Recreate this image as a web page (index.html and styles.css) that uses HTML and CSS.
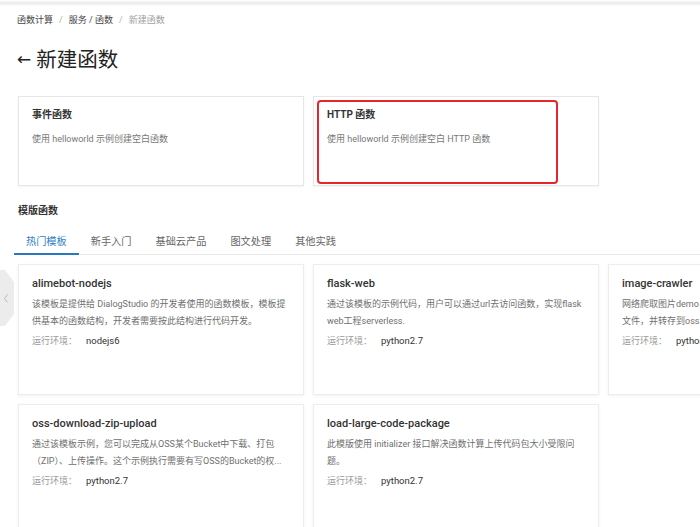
FILE: index.html
```html
<!DOCTYPE html>
<html lang="zh-CN">
<head>
<meta charset="utf-8">
<title>新建函数</title>
<link rel="stylesheet" href="styles.css">
</head>
<body>
<div class="topbar"></div>
<main class="page">
  <nav class="breadcrumb">
    <span class="crumb">函数计算</span><span class="sep">/</span><span class="crumb">服务 / 函数</span><span class="sep">/</span><span class="crumb current">新建函数</span>
  </nav>
  <h1 class="title"><span class="back">←</span>新建函数</h1>

  <div class="type-row">
    <div class="type-card">
      <div class="type-title">事件函数</div>
      <div class="type-desc">使用 helloworld 示例创建空白函数</div>
    </div>
    <div class="type-card">
      <div class="type-title">HTTP 函数</div>
      <div class="type-desc">使用 helloworld 示例创建空白 HTTP 函数</div>
      <div class="highlight"></div>
    </div>
  </div>

  <div class="section-label">模版函数</div>

  <div class="tabs">
    <div class="tab active">热门模板</div>
    <div class="tab">新手入门</div>
    <div class="tab">基础云产品</div>
    <div class="tab">图文处理</div>
    <div class="tab">其他实践</div>
  </div>

  <div class="tpl-wrap">
    <div class="prev">
      <svg width="15" height="56" viewBox="0 0 15 56"><path d="M0 0 H5 L14 12 V44 L5 56 H0 Z" fill="#ececec"/><path d="M7.5 24.5 L4.5 28.5 L7.5 32.5" fill="none" stroke="#b8b8b8" stroke-width="1"/></svg>
    </div>
    <div class="tpl-grid">
      <div class="tpl-card">
        <div class="tpl-title">alimebot-nodejs</div>
        <div class="tpl-desc">该模板是提供给 DialogStudio 的开发者使用的函数模板，模板提供基本的函数结构，开发者需要按此结构进行代码开发。</div>
        <div class="tpl-env"><span class="env-label">运行环境：</span><span class="env-value">nodejs6</span></div>
      </div>
      <div class="tpl-card">
        <div class="tpl-title">flask-web</div>
        <div class="tpl-desc">通过该模板的示例代码，用户可以通过url去访问函数，实现flask web工程serverless.</div>
        <div class="tpl-env"><span class="env-label">运行环境：</span><span class="env-value">python2.7</span></div>
      </div>
      <div class="tpl-card">
        <div class="tpl-title">image-crawler</div>
        <div class="tpl-desc">网络爬取图片demo，从指定网页中爬取所有图片<br>文件，并转存到oss中，方便后续处理。</div>
        <div class="tpl-env"><span class="env-label">运行环境：</span><span class="env-value">python2.7</span></div>
      </div>
      <div class="tpl-card">
        <div class="tpl-title">oss-download-zip-upload</div>
        <div class="tpl-desc">通过该模板示例，您可以完成从OSS某个Bucket中下载、打包（ZIP）、上传操作。这个示例执行需要有写OSS的Bucket的权...</div>
        <div class="tpl-env"><span class="env-label">运行环境：</span><span class="env-value">python2.7</span></div>
      </div>
      <div class="tpl-card">
        <div class="tpl-title">load-large-code-package</div>
        <div class="tpl-desc">此模版使用 initializer 接口解决函数计算上传代码包大小受限问题。</div>
        <div class="tpl-env"><span class="env-label">运行环境：</span><span class="env-value">python2.7</span></div>
      </div>
    </div>
  </div>
</main>
</body>
</html>
```

FILE: styles.css
```css
* { box-sizing: border-box; }
html, body {
  margin: 0;
  padding: 0;
  background: #fff;
  overflow: hidden;
}
body {
  width: 700px;
  height: 527px;
  font-family: "Roboto", "Noto Sans CJK SC", sans-serif;
  color: #333;
}
.topbar {
  height: 6px;
  background: linear-gradient(#ffffff 0, #ffffff 1px, #ececec 2px, #efefef 4px, #ffffff 6px);
}
.page {
  padding: 0 0 0 18px;
  width: 1000px;
}
.breadcrumb {
  margin-top: 7px;
  font-size: 9px;
  line-height: 14px;
  display: flex;
  align-items: center;
  margin-left: -1px;
}
.crumb { color: #444; }
.crumb.current { color: #a0a0a0; }
.sep { color: #b0b0b0; margin: 0 6px; }
.title {
  margin: 19px 0 0 -1px;
  font-size: 20.5px;
  line-height: 28px;
  font-weight: 400;
  color: #222;
  display: flex;
  align-items: center;
}
.back {
  margin-right: 5px;
  font-family: "DejaVu Sans", sans-serif;
  font-size: 17px;
  position: relative;
  top: -1px;
}
.type-row {
  margin-top: 22px;
  display: flex;
  gap: 9px;
}
.type-card {
  position: relative;
  width: 286px;
  height: 90px;
  border: 1px solid #e6e6e6;
  box-shadow: 0 1px 2px rgba(0,0,0,0.05);
  padding: 11px 13px;
  background: #fff;
}
.type-title {
  font-size: 10px;
  line-height: 14px;
  font-weight: 700;
  color: #333;
}
.type-desc {
  margin-top: 10px;
  font-size: 9px;
  line-height: 14px;
  color: #777;
}
.highlight {
  position: absolute;
  left: 3px;
  top: 3px;
  width: 241px;
  height: 84px;
  border: 2px solid #e5262b;
  border-radius: 4px;
}
.section-label {
  margin-top: 18px;
  font-size: 10px;
  line-height: 14px;
  font-weight: 700;
  color: #333;
}
.tabs {
  margin-top: 8px;
  margin-left: -4px;
  width: 700px;
  display: flex;
  border-bottom: 1px solid #e8e8e8;
}
.tab {
  padding: 9px 12px 4px;
  font-size: 10.2px;
  line-height: 14px;
  color: #666;
  border-bottom: 2px solid transparent;
  margin-bottom: -1px;
}
.tab.active {
  color: #2f7ec6;
  border-bottom-color: #2a78c0;
}
.tpl-wrap {
  position: relative;
  margin-top: 9px;
}
.prev {
  position: absolute;
  left: -18px;
  top: 6px;
  width: 15px;
  height: 56px;
}
.prev svg { display: block; }
.tpl-grid {
  display: grid;
  grid-template-columns: repeat(3, 286px);
  grid-auto-rows: 131px;
  gap: 9px;
}
.tpl-card {
  border: 1px solid #ededed;
  box-shadow: 0 1px 3px rgba(0,0,0,0.06);
  padding: 12px 13px;
  background: #fff;
}
.tpl-title {
  font-size: 11px;
  line-height: 14px;
  font-weight: 500;
  color: #333;
}
.tpl-desc {
  margin-top: 5px;
  font-size: 9px;
  line-height: 17px;
  color: #6f6f6f;
  height: 34px;
  overflow: hidden;
}
.tpl-env {
  margin-top: 4px;
  font-size: 9px;
  line-height: 14px;
  display: flex;
}
.env-label { color: #9a9a9a; width: 54px; }
.env-value { color: #333; font-size: 9.5px; }
```
